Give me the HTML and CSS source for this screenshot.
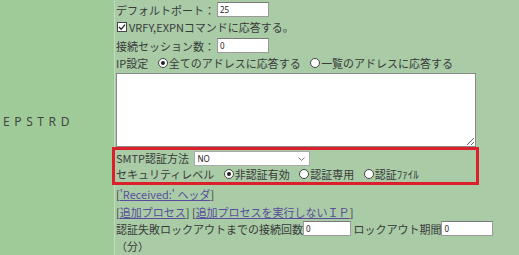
FILE: index.html
```html
<!DOCTYPE html>
<html lang="ja">
<head>
<meta charset="utf-8">
<link rel="stylesheet" href="styles.css">
</head>
<body>
<div class="page">
  <div class="label-cell"><span class="label">EPSTRD</span></div>
  <div class="content-cell">
    <div class="row r1">デフォルトポート：<input class="txt" type="text" value="25"></div>
    <div class="row r2"><span class="chk"><svg width="10" height="10" viewBox="0 0 10 10"><rect x="0.5" y="0.5" width="9" height="9" fill="#fff" stroke="#444"/><path d="M2 5 L4.2 7.3 L8 2.6" fill="none" stroke="#222" stroke-width="1.3"/></svg></span>VRFY,EXPNコマンドに応答する。</div>
    <div class="row r3">接続セッション数：<input class="txt" type="text" value="0"></div>
    <div class="row r4">IP設定 <span class="radio on"></span>全てのアドレスに応答する <span class="radio"></span>一覧のアドレスに応答する</div>
    <textarea class="area"></textarea>
    <div class="redbox">
      <div class="row rb1">SMTP認証方法 <span class="selwrap"><select class="sel"><option>NO</option></select><svg class="chev" width="7" height="4" viewBox="0 0 7 4"><path d="M0.5 0.5 L3.5 3.5 L6.5 0.5" fill="none" stroke="#777" stroke-width="1"/></svg></span></div>
      <div class="row rb2">セキュリティレベル <span class="radio on"></span>非認証有効 <span class="radio"></span>認証専用 <span class="radio"></span>認証ﾌｧｲﾙ</div>
    </div>
    <div class="row r5">[<a href="#">'Received:' ヘッダ</a>]</div>
    <div class="row r6">[<a href="#">追加プロセス</a>] [<a href="#">追加プロセスを実行しないＩＰ</a>]</div>
    <div class="row r7">認証失敗ロックアウトまでの接続回数<input class="txt w48" type="text" value="0"> ロックアウト期間<input class="txt" type="text" value="0"></div>
    <div class="row r8">（分）</div>
  </div>
</div>
</body>
</html>
```

FILE: styles.css
```css
html, body {
  margin: 0;
  padding: 0;
  background: #a9cca7;
}
body {
  font-family: "Noto Sans CJK JP", "Noto Sans", sans-serif;
  font-size: 11px;
  color: #3a3a3a;
}
.page {
  display: flex;
  width: 519px;
  height: 255px;
  overflow: hidden;
}
.label-cell {
  width: 115px;
  flex: none;
  background: #9fcb99;
  border-right: 1px solid #c3dcc0;
  display: flex;
  align-items: center;
  padding-bottom: 12px;
  box-sizing: border-box;
}
.label {
  font-family: "Noto Sans", sans-serif;
  font-size: 12px;
  letter-spacing: 4.6px;
  color: #444;
  padding-left: 3px;
}
.content-cell {
  flex: 1;
  background: #a9cca7;
  padding-left: 1px;
  display: flex;
  flex-direction: column;
}
.row {
  display: flex;
  align-items: center;
  white-space: pre;
  line-height: 16px;
}
.r1 { height: 19px; }
.r2 { height: 16px; padding-left: 1px; }
.r3 { height: 19px; margin-top: 1px; }
.r4 { height: 16px; }
.r5 { height: 18px; }
.r6 { height: 17px; }
.r7 { height: 17px; }
.r8 { height: 18px; }
.txt {
  width: 52px;
  height: 15px;
  box-sizing: border-box;
  border: 1px solid #9a9a9a;
  border-top-color: #7a7a7a;
  background: #fff;
  font-family: "Noto Sans", sans-serif;
  font-size: 8px;
  color: #222;
  padding: 0 2px;
  margin: 0 0 0 2px;
  outline: none;
}
.r7 .txt { margin-left: 0; }
.w48 { width: 48px; }
.chk {
  display: inline-flex;
  width: 10px;
  height: 10px;
  margin: 0 2px 0 0;
}
.radio {
  display: inline-block;
  box-sizing: border-box;
  width: 10px;
  height: 10px;
  border: 1px solid #444;
  border-radius: 50%;
  background: #fff;
  margin: 0 1px 0 7px;
  position: relative;
}
.radio.on::after {
  content: "";
  position: absolute;
  left: 2px;
  top: 2px;
  width: 4px;
  height: 4px;
  border-radius: 50%;
  background: #222;
}
.area {
  display: block;
  width: 360px;
  height: 74px;
  box-sizing: border-box;
  margin: 2px 0 0 0;
  border: 1px solid #8a8a8a;
  background: #fff;
  padding: 0;
  resize: both;
}
.redbox {
  margin-left: -4px;
  width: 367px;
  height: 38px;
  box-sizing: border-box;
  border: 3px solid #dc1f2a;
  padding-left: 1px;
}
.rb1 { height: 16px; }
.rb2 { height: 16px; }
.selwrap {
  position: relative;
  display: inline-block;
  height: 15px;
  margin-left: 2px;
}
.sel {
  appearance: none;
  -webkit-appearance: none;
  width: 116px;
  height: 15px;
  box-sizing: border-box;
  border: 1px solid #aaa;
  background: #fff;
  font-family: "Noto Sans", sans-serif;
  font-size: 8px;
  color: #222;
  padding: 0 3px;
  margin: 0;
  display: block;
  outline: none;
}
.chev {
  position: absolute;
  right: 5px;
  top: 6px;
}
a {
  color: #5a4b9c;
  text-decoration: underline;
}
```
